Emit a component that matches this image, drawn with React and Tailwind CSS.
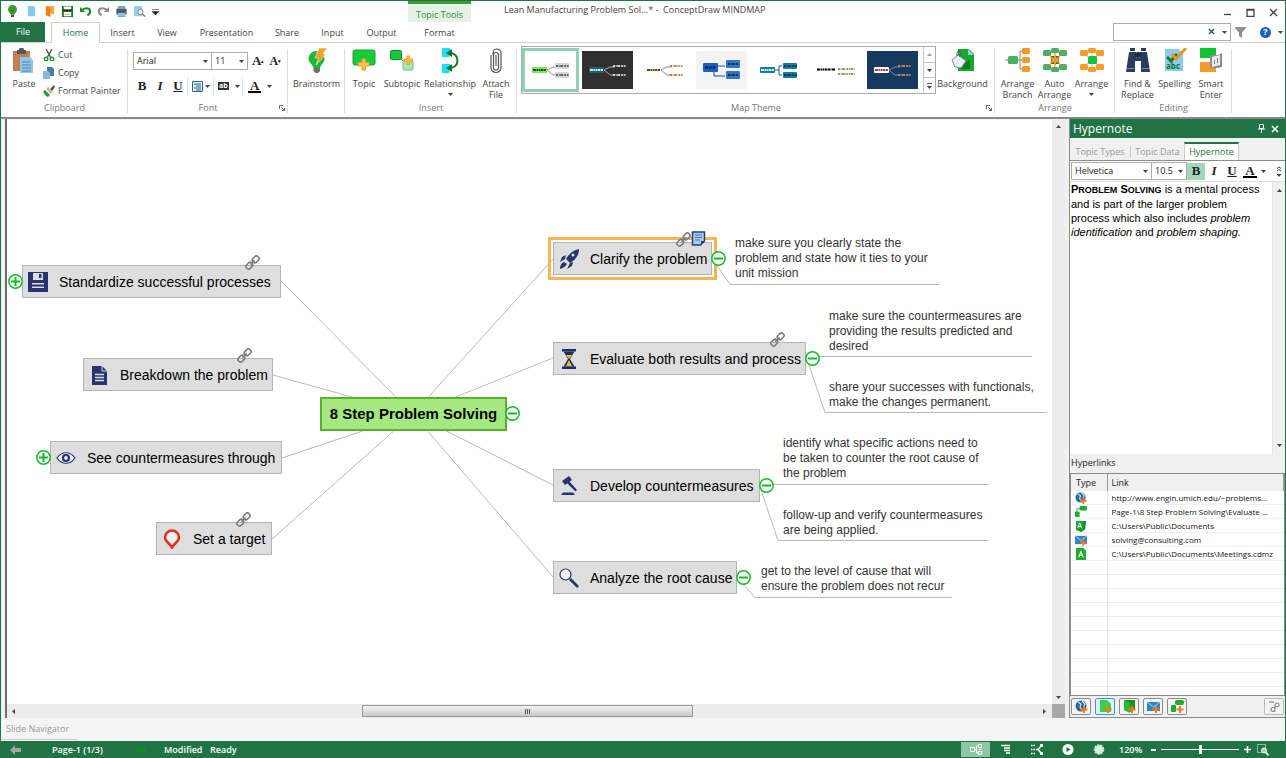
import React from 'react'

const themes = [
  { name: 'Green', bg: 'bg-white', main: '#86e05a', line: '#999', sub: '#d5d5d5', mainText: '#1d5a10', subText: '#444' },
  { name: 'Dark', bg: 'bg-[#303030]', main: '#1f5f73', line: '#aaa', sub: 'none', mainText: '#cfe8f0', subText: '#fff' },
  { name: 'Plain', bg: 'bg-white', main: 'none', line: '#888', sub: 'none', mainText: '#7a3d10', subText: '#b5651d' },
  { name: 'Blue', bg: 'bg-[#f3f3f3]', main: '#1b5fc4', line: '#1b4f9c', sub: '#2f78c8', mainText: '#04183e', subText: '#04183e', big: true },
  { name: 'Teal', bg: 'bg-white', main: '#1a78a8', line: '#1a5a88', sub: '#1a78a8', mainText: '#cfeeff', subText: '#04283e', square: true },
  { name: 'Classic', bg: 'bg-white', main: 'none', line: 'none', sub: 'none', mainText: '#000', subText: '#84762a', wide: true },
  { name: 'Night', bg: 'bg-[#163a5f]', main: '#fff', line: '#6d8aa8', sub: 'none', mainText: '#b03a6a', subText: '#f0a050' },
]

const topics = [
  { text: 'Standardize successful processes', box: 'left-[15px] top-[145px] w-[259px]', icon: 'floppy', fold: '+', foldPos: '-left-[15px]', link: true },
  { text: 'Breakdown the problem', box: 'left-[76px] top-[238px] w-[190px]', icon: 'page', link: true },
  { text: 'See countermeasures through', box: 'left-[43px] top-[321px] w-[232px]', icon: 'eye', fold: '+', foldPos: '-left-[15px]' },
  { text: 'Set a target', box: 'left-[149px] top-[402px] w-[116px]', icon: 'pin', link: true },
  { text: 'Clarify the problem', box: 'left-[546px] top-[122px] w-[159px]', icon: 'rocket', fold: '-', foldPos: '-right-[15px]', link: true, note: true, selected: true },
  { text: 'Evaluate both results and process', box: 'left-[546px] top-[222px] w-[253px]', icon: 'hourglass', fold: '-', foldPos: '-right-[15px]', link: true },
  { text: 'Develop countermeasures', box: 'left-[546px] top-[349px] w-[207px]', icon: 'gavel', fold: '-', foldPos: '-right-[15px]' },
  { text: 'Analyze the root cause', box: 'left-[546px] top-[441px] w-[184px]', icon: 'lens', fold: '-', foldPos: '-right-[15px]' },
]

const notes = [
  { pos: 'left-[728px] top-[116px]', lines: ['make sure you clearly state the', 'problem and state how it ties to your', 'unit mission'] },
  { pos: 'left-[822px] top-[189px]', lines: ['make sure the countermeasures are', 'providing the results predicted and', 'desired'] },
  { pos: 'left-[822px] top-[260px]', lines: ['share your successes with functionals,', 'make the changes permanent.'] },
  { pos: 'left-[776px] top-[316px]', lines: ['identify what specific actions need to', 'be taken to counter the root cause of', 'the problem'] },
  { pos: 'left-[776px] top-[388px]', lines: ['follow-up and verify countermeasures', 'are being applied.'] },
  { pos: 'left-[754px] top-[444px]', lines: ['get to the level of cause that will', 'ensure the problem does not recur'] },
]

const links = [
  { icon: 'globe', text: 'http://www.engin.umich.edu/~problems...' },
  { icon: 'topic', text: 'Page-1\\8 Step Problem Solving\\Evaluate ...' },
  { icon: 'folderA', text: 'C:\\Users\\Public\\Documents' },
  { icon: 'mail', text: 'solving@consulting.com' },
  { icon: 'fileA', text: 'C:\\Users\\Public\\Documents\\Meetings.cdmz' },
]

const Caret = ({ className = '' }) => (
  <svg className={className} width="5" height="3" viewBox="0 0 5 3" aria-hidden="true">
    <path d="M0 0h5L2.5 3z" fill="#444" />
  </svg>
)

const Launcher = () => (
  <button aria-label="More options" className="absolute right-[3px] bottom-[6px]">
    <svg width="6" height="6" viewBox="0 0 6 6">
      <path d="M.5 4V.5H4M2.5 2.500l3 3M5.500 3v2.500H3" fill="none" stroke="#666" />
    </svg>
  </button>
)

const Bulb = () => (
  <svg width="13" height="13" viewBox="0 0 13 13">
    <path d="M6.500 0a4.500 4.500 0 0 1 4.500 4.500c0 2.200-1.800 3-2.500 5h-4C3.800 7.500 2 6.700 2 4.500A4.500 4.500 0 0 1 6.500 0z" fill="#3d9a2c" />
    <path d="M5 9.500h3V12H5z" fill="#5a4a40" />
    <path d="M5 5l1.500 1.500L8 5" stroke="#1d6a14" fill="none" />
  </svg>
)

const quickIcons = [
  ['New', <path key="a" d="M3 1h6l2 2v9H3z" fill="#8cc8ea" />],
  ['Open', <g key="a"><path d="M3 1h9v9H9z" fill="#f9a94a" /><path d="M3 1l5 2v10l-5-2z" fill="#f28010" /></g>],
  ['Save', <g key="a"><path d="M1 1h12v12H1z" fill="#1a7a24" /><path d="M3 1.500h8V5H3zM3 7.500h8v4.500H3z" fill="#fff" /><path d="M2 5.500h10" stroke="#222" strokeWidth="1.500" /><path d="M4 10h6" stroke="#f5a040" /></g>],
  ['Undo', <g key="a" fill="none" stroke="#1f8a2c" strokeWidth="2.200"><path d="M3 6c3-4 9-3 9 1 0 2-1 3-3 4" /><path d="M1 2v5.500h5.500z" fill="#1f8a2c" stroke="none" /></g>],
  ['Redo', <g key="a" fill="none" stroke="#8c8c8c" strokeWidth="2.200"><path d="M11 6C8 2 2 3 2 7c0 2 1 3 3 4" /><path d="M13 2v5.500H7.500z" fill="#8c8c8c" stroke="none" /></g>],
  ['Print', <g key="a"><path d="M3 1h8v3H3zM3 9h8v4H3z" fill="#6ba6cf" /><path d="M1.500 4h11v6h-11z" fill="#4c5a66" /><path d="M3 8.500h8v3.500H3z" fill="#8cc4e8" /></g>],
  ['Print Preview', <g key="a"><path d="M1 1h8l1 2v9H1z" fill="#9ccdea" /><circle cx="8" cy="7.500" r="2.800" fill="#e8f5fd" stroke="#74889a" /><path d="M10 9.500l3 3" stroke="#b06a4a" strokeWidth="1.500" /></g>],
]

const arrangeBlocks = [[9, 0, 5], [1, 2, 6], [17, 2, 6], [1, 16, 6], [17, 16, 6], [9, 19, 5]]

const bigIcons = {
  paste: (
    <g>
      <path d="M2 3h17v20H2z" fill="#bf8150" />
      <path d="M6 2h2a2.500 2.500 0 0 1 5 0h2v4H6z" fill="#555" />
      <path d="M9 9h10l3 3v13H9z" fill="#8ec5ea" />
      <path d="M11 14h8M11 17h9M11 20h9M11 23h9" stroke="#4b86ad" />
    </g>
  ),
  brainstorm: (
    <g>
      <path d="M12.500 3a8 8 0 0 1 8 8c0 4-3.500 5-4.500 9H9.500c-1-4-5-5.500-5-9a8 8 0 0 1 8-8z" fill="#1dbb35" />
      <path d="M9.500 20H16v3l-2 2h-2.500l-2-2z" fill="#707070" />
      <path d="M15 0h8l-4 6h3L12 17l2.500-7H11z" fill="#f6a02c" stroke="#fff" strokeWidth=".5" />
    </g>
  ),
  topic: (
    <g>
      <rect x="2" y="2" width="22" height="15" rx="2" fill="#14cc3c" stroke="#1a9c30" />
      <path d="M11 11h3.500v3.500H18v3.500h-3.500v4H11v-4H7v-3.500h4z" fill="#ffc35a" stroke="#f09a20" />
    </g>
  ),
  subtopic: (
    <g>
      <path d="M12 11l4 4" stroke="#5a9a60" />
      <rect x="1.500" y="2.500" width="11" height="9" rx="1" fill="#14c83c" stroke="#1a8a30" />
      <rect x="14" y="13" width="10" height="9" rx="1" fill="#a8e8b4" stroke="#6cc080" />
      <path d="M18 8h2.500v3h3v2.500h-3v3H18v-3h-3V11h3z" fill="#ffc35a" stroke="#f09a20" />
    </g>
  ),
  relationship: (
    <g>
      <path d="M5 0h8l1 4-2 5H5zM5 16h8l1 4-2 5H5z" fill="#22dcfa" />
      <path d="M13 5c10 0 10 15 0 15" fill="none" stroke="#0f7a2a" strokeWidth="2" />
      <path d="M9 5l6-4v8zM9 20l6-4v8z" fill="#0f7a2a" />
    </g>
  ),
  clip: <path d="M15.500 8v11.500a2.500 2.500 0 0 1-5 0V6.500M8 7v12.500a5 5 0 0 0 10 0V5a4 4 0 0 0-8 0v2M13 7v11M10.500 7a2 2 0 0 1 5 0v2" fill="none" stroke="#555" strokeWidth="1.200" />,
  background: (
    <g>
      <path d="M8 1h11l5 5v17H8z" fill="#15a82b" />
      <path d="M18 1l6 6h-6z" fill="#8ccff0" />
      <path d="M10 16l10-4v9H10z" fill="#0c7f20" />
      <path d="M2 12l6-5 8 6-5 7-6-1z" fill="#eaf1f5" stroke="#7c8a92" />
      <path d="M10 9V4c-1-2-3-1-3 1v3" stroke="#555" fill="none" />
    </g>
  ),
  branch: (
    <g>
      <path d="M0 12h20M15 3v18M15 3h3M15 21h3" stroke="#8a8a70" fill="none" />
      <rect x="3" y="8" width="10" height="8" rx="1.500" fill="#48b060" />
      {[0, 9, 18].map((y) => <rect key={y} x="17" y={y} width="8" height="6" rx="1.500" fill="#f59c28" />)}
    </g>
  ),
  auto: (
    <g>
      {arrangeBlocks.map(([x, y, h]) => <rect key={x + '-' + y} x={x} y={y} width="8" height={h} rx="1.500" fill="#49b162" />)}
      <path d="M9 8h8v8H9z" fill="#207a30" />
      <path d="M13 3v18M5 5l16 14M21 5L5 19" stroke="#e0752a" />
      <path d="M13 7l1.500 3 4-.5-2.500 2.500 2.500 3-4-1-1.500 3-1.500-3-4 1 2.500-3-2.500-2.500 4 .5z" fill="#f59c28" />
    </g>
  ),
  arrange: (
    <g>
      <path d="M13 5v16M5 6l16 12M21 6L5 18" stroke="#e3b788" />
      {arrangeBlocks.map(([x, y, h]) => <rect key={x + '-' + y} x={x} y={y} width="8" height={h} rx="1.500" fill="#f59c28" />)}
      <rect x="9" y="8" width="9" height="8" rx="1.500" fill="#18c23c" />
    </g>
  ),
  find: (
    <g fill="#2a3d5e">
      <path d="M5 0h5v3H5zM16 0h5v3h-5zM4 4h7v6h4V4h7l3 20h-9V13h-6v11H1z" />
      <circle cx="13" cy="7" r="3" fill="#1c2b45" />
      <path d="M2 20h7v1H2zM17 20h7v1h-7z" fill="#7287a8" />
    </g>
  ),
  spelling: (
    <g>
      <path d="M3 1h14l4 4v18H3z" fill="#8bcdf0" />
      <path d="M5 9l4 4 6-7" fill="none" stroke="#1a7a30" strokeWidth="3" />
      <path d="M10 6l4 5L24 0" fill="none" stroke="#f59320" strokeWidth="3" />
      <text x="4" y="21" fontSize="8" fontWeight="700" fill="#0f7030" fontFamily="Open Sans, sans-serif">abc</text>
    </g>
  ),
  smart: (
    <g>
      <path d="M2 0h16v10H2z" fill="#12c232" />
      <path d="M2 14h16v10H2z" fill="#f59c28" />
      <path d="M12 7h8l4-2v14l-4 1h-8z" fill="#8d8d8d" />
      <path d="M14 9l8-2v10l-8 2z" fill="#ededed" />
      <path d="M16.500 12v4M19.500 10v5" stroke="#777" />
    </g>
  ),
}

const BigButton = ({ icon, lines, width, menu }) => (
  <button className={`${width} flex shrink-0 flex-col items-center text-center leading-[11px]`}>
    <svg width="26" height="26" viewBox="0 0 26 26" className="mb-[4px]" aria-hidden="true">{bigIcons[icon]}</svg>
    {lines.map((l) => <span key={l} className="whitespace-nowrap">{l}</span>)}
    {menu && <Caret className="mt-[4px]" />}
  </button>
)

const Group = ({ title, width, launcher, children }) => (
  <section aria-label={title} className={`${width} relative flex shrink-0 flex-col`}>
    <div className="flex h-[55px]">{children}</div>
    {title && <div className="text-center leading-[14px] text-[#777]">{title}</div>}
    {launcher && <Launcher />}
    <span className="absolute top-[3px] right-0 h-[64px] w-px bg-[#dcdcdc]" />
  </section>
)

const SelectBox = ({ label, value, width }) => (
  <div className={`${width} relative h-[18px] shrink-0`}>
    <select aria-label={label} defaultValue={value} className="h-full w-full appearance-none border border-[#ababab] bg-white pl-[3px] text-[9px] text-[#222]">
      <option>{value}</option>
    </select>
    <Caret className="pointer-events-none absolute top-[8px] right-[4px]" />
  </div>
)

const FormatLetter = ({ label, className = '', children }) => (
  <button aria-label={label} className={`${className} flex h-[17px] w-[18px] shrink-0 items-center justify-center font-["Liberation_Serif",serif] text-[13px] font-bold text-[#222]`}>
    {children}
  </button>
)

const ColorLetter = () => (
  <span className="border-b-2 border-black px-[2px] leading-[11px]">A</span>
)

const Divider = () => <span className="h-[18px] w-px bg-[#cfe8da]" />

const ThemePreview = ({ t }) => (
  <svg width="51" height="38" viewBox="0 0 51 38" aria-hidden="true">
    {t.line !== 'none' && <path d={t.square ? 'M21 19h5M26 15v9M26 15h3M26 24h3' : t.big ? 'M14 15h15M18 19v6h11' : 'M22 19l6-3h5M22 19l6 5h5'} fill="none" stroke={t.line} />}
    <rect x="7" y={t.big ? 12 : 16} width="15" height={t.big ? 9 : 6} rx="1" fill={t.main} />
    <path d={t.big ? 'M9 16.500h11' : t.wide ? 'M7 18.500h18' : 'M8 19h13'} stroke={t.mainText} strokeWidth="2" strokeDasharray="3 .5 2 .5 1 .5" />
    <rect x="30" y={t.big ? 9 : 12} width="14" height={t.big ? 8 : 6} rx="1" fill={t.sub} />
    <rect x="30" y={t.big ? 20 : 21} width="14" height={t.big ? 8 : 6} rx="1" fill={t.sub} />
    <path d={t.big ? 'M32 13h10M32 24h10' : t.wide ? 'M28 18h17M28 23h17' : 'M31 15h13M31 24h13'} stroke={t.subText} strokeWidth="1.500" strokeDasharray="2 .7 1 .5 3 1" />
  </svg>
)

const TitleBar = () => (
  <header className="flex h-[21px] shrink-0">
    <div className="flex w-[407px] shrink-0 items-center pl-px">
      <span className="flex w-[20px] justify-center"><Bulb /></span>
      {quickIcons.map(([name, shape]) => (
        <button key={name} aria-label={name} className="flex w-[18px] justify-center">
          <svg width="13" height="13" viewBox="0 0 14 14">{shape}</svg>
        </button>
      ))}
      <button aria-label="Customize" className="ml-[4px]">
        <svg width="7" height="6" viewBox="0 0 7 6"><path d="M0 .5h7M0 2.500h7L3.500 6z" stroke="#1c2040" fill="#1c2040" strokeWidth=".5" /></svg>
      </button>
    </div>
    <div className="w-[63px] shrink-0 border-t-[3px] border-[#3f9a3c] bg-[#e3f2e3] pt-[3px] text-center leading-[16px] text-[#3c8a4a]">Topic Tools</div>
    <h1 className="ml-[33px] pt-[2px] leading-[14px] whitespace-pre text-[#444]">{'Lean Manufacturing Problem Sol...* -  ConceptDraw MINDMAP'}</h1>
    <div className="ml-auto flex items-end">
      {[['Minimize', 'M1 6.500h7'], ['Maximize', 'M1 1.500h7v7h-7zM1 2h7'], ['Close', 'M1 1l7 7M8 1L1 8']].map(([name, d]) => (
        <button key={name} aria-label={name} className="flex w-[23px] justify-center pb-[5px]">
          <svg width="9" height="9" viewBox="0 0 9 9"><path d={d} fill="none" stroke="#444" strokeWidth="1.300" /></svg>
        </button>
      ))}
    </div>
  </header>
)

const tabs = [
  ['Insert', 'w-[45px]'], ['View', 'w-[44px]'], ['Presentation', 'w-[75px]'], ['Share', 'w-[46px]'],
  ['Input', 'w-[45px]'], ['Output', 'w-[53px]'], ['Format', 'w-[63px]'],
]

const TabRow = () => (
  <nav className="flex h-[21px] shrink-0 border-b border-[#d0d0d0]">
    <button className="w-[44px] bg-[#217346] text-white">File</button>
    <button className="-mb-px ml-[6px] w-[49px] border border-b-0 border-[#d0d0d0] bg-white text-[#217346]">Home</button>
    {tabs.map(([name, width]) => <button key={name} className={`${width} pt-px`}>{name}</button>)}
    <div className="ml-auto flex items-center">
      <div className="relative mr-[4px] w-[118px]">
        <input aria-label="Search" className="block h-[18px] w-full border border-[#ababab] bg-white pr-[28px] pl-1" />
        <svg className="absolute top-[5px] right-[16px]" width="7" height="7" viewBox="0 0 7 7"><path d="M1 1l5 5M6 1L1 6" stroke="#1d4f86" strokeWidth="1.400" /></svg>
        <Caret className="absolute top-[8px] right-[4px]" />
      </div>
      <button aria-label="Filter">
        <svg width="11" height="12" viewBox="0 0 11 12"><path d="M0 1h11v1L7 6.500V12L4 10V6.500L0 2z" fill="#8a8f94" /></svg>
      </button>
      <button aria-label="Help" className="mr-[7px] ml-[14px] flex h-[11px] w-[11px] items-center justify-center rounded-full bg-[#1a62b5] text-[9px] font-bold text-white">?</button>
      <Caret className="mr-[2px]" />
    </div>
  </nav>
)

const clipboardItems = [
  ['Cut', <g key="a"><path d="M3 0l5 9M9 0L4 9" stroke="#555" strokeWidth="1.400" /><circle cx="3" cy="10" r="1.800" fill="none" stroke="#1d9a30" strokeWidth="1.400" /><circle cx="9" cy="10" r="1.800" fill="none" stroke="#1d9a30" strokeWidth="1.400" /></g>],
  ['Copy', <g key="a"><path d="M4 0h5l2 2v7H4z" fill="#4a7aa8" /><path d="M0 4h5l2 2v6H0z" fill="#86b7dc" /></g>],
  ['Format Painter', <g key="a"><path d="M11 0L7 4l2 2 3-4z" fill="#555" /><path d="M5 2l5 5-2 2-5-5z" fill="#d8b48c" /><path d="M2 5l5 5-2 2-2-1-3-4z" fill="#1d9a40" /></g>],
]

const Ribbon = () => (
  <div className="flex h-[76px] shrink-0 border-b-2 border-[#8a8a8a] pt-[3px]">
    <Group title="Clipboard" width="w-[127px]">
      <div className="flex w-full pl-[4px]">
        <div className="pt-[2px]"><BigButton icon="paste" lines={['Paste']} width="w-[38px]" /></div>
        <div className="flex flex-col">
          {clipboardItems.map(([name, shape]) => (
            <button key={name} className="flex h-[18px] items-center gap-[3px] whitespace-nowrap">
              <svg width="12" height="12" viewBox="0 0 12 12">{shape}</svg>{name}
            </button>
          ))}
        </div>
      </div>
    </Group>
    <Group title="Font" width="w-[160px]" launcher>
      <div className="flex flex-col gap-[7px] pt-[6px] pl-[5px]">
        <div className="flex items-center">
          <SelectBox label="Font" value="Arial" width="w-[79px]" />
          <SelectBox label="Font size" value="11" width="w-[37px] -ml-px" />
          <button aria-label="Grow font" className="ml-[4px] font-['Liberation_Serif',serif] text-[13px] leading-[14px] font-bold text-[#222]">A<sup className="text-[5px]">▴</sup></button>
          <button aria-label="Shrink font" className="ml-[5px] font-['Liberation_Serif',serif] text-[12px] leading-[14px] font-bold text-[#222]">A<sup className="text-[5px]">▾</sup></button>
        </div>
        <div className="flex items-center">
          <FormatLetter label="Bold">B</FormatLetter>
          <FormatLetter label="Italic"><i>I</i></FormatLetter>
          <FormatLetter label="Underline"><u>U</u></FormatLetter>
          <Divider />
          <button aria-label="Align" className="mr-[3px] ml-[4px] flex items-center gap-[2px]">
            <svg width="11" height="11" viewBox="0 0 11 11"><path d="M.5.500h10v10H.5z" fill="#e0f0f8" stroke="#2a6a8a" /><path d="M2 3h7M4 5h5M2 7h7M4 9h5" stroke="#2a6a8a" /></svg>
            <Caret />
          </button>
          <Divider />
          <button aria-label="Highlight" className="mr-[2px] ml-[4px] flex items-center gap-[6px]">
            <span className="bg-[#333] px-[1px] text-[7px] leading-[8px] font-bold text-white">ab</span>
            <Caret />
          </button>
          <Divider />
          <FormatLetter label="Font color" className="ml-[3px]"><ColorLetter /></FormatLetter>
          <Caret className="ml-[3px]" />
        </div>
      </div>
    </Group>
    <Group width="w-[57px]">
      <div className="pt-[2px]"><BigButton icon="brainstorm" lines={['Brainstorm']} width="w-[57px]" /></div>
    </Group>
    <Group title="Insert" width="w-[172px]">
      <div className="flex pt-[2px]">
        <BigButton icon="topic" lines={['Topic']} width="w-[38px]" />
        <BigButton icon="subtopic" lines={['Subtopic']} width="w-[38px]" />
        <BigButton icon="relationship" lines={['Relationship']} width="w-[58px]" menu />
        <BigButton icon="clip" lines={['Attach', 'File']} width="w-[34px]" />
      </div>
    </Group>
    <Group title="Map Theme" width="w-[478px]" launcher>
      <div className="flex pl-[4px]">
        <div className="flex h-[48px] w-[415px] shrink-0 border border-[#ababab]">
          <div className="flex flex-1 items-center gap-[6px]">
            {themes.map((t, i) => (
              <button key={t.name} aria-label={`${t.name} theme`} className={`${i === 0 ? 'mr-[-3px] h-[44px] border-[3px] border-[#8fd0ae]' : 'h-[38px]'} ${t.bg} flex items-center`}>
                <ThemePreview t={t} />
              </button>
            ))}
          </div>
          <div className="flex w-[12px] flex-col divide-y divide-[#c4c4c4] border-l border-[#c4c4c4]">
            <button aria-label="Previous themes" className="flex flex-1 items-center justify-center"><Caret className="rotate-180 opacity-50" /></button>
            <button aria-label="Next themes" className="flex flex-1 items-center justify-center"><Caret /></button>
            <button aria-label="All themes" className="flex flex-1 flex-col items-center justify-center gap-[2px]"><span className="h-px w-[5px] bg-[#555]" /><Caret /></button>
          </div>
        </div>
        <div className="pt-[2px]"><BigButton icon="background" lines={['Background']} width="w-[53px]" /></div>
      </div>
    </Group>
    <Group title="Arrange" width="w-[120px]">
      <div className="flex pt-[2px] pl-[4px]">
        <BigButton icon="branch" lines={['Arrange', 'Branch']} width="w-[37px]" />
        <BigButton icon="auto" lines={['Auto', 'Arrange']} width="w-[37px]" />
        <BigButton icon="arrange" lines={['Arrange']} width="w-[37px]" menu />
      </div>
    </Group>
    <Group title="Editing" width="w-[117px]">
      <div className="flex pt-[2px] pl-[4px]">
        <BigButton icon="find" lines={['Find &', 'Replace']} width="w-[37px]" />
        <BigButton icon="spelling" lines={['Spelling']} width="w-[37px]" />
        <BigButton icon="smart" lines={['Smart', 'Enter']} width="w-[36px]" />
      </div>
    </Group>
  </div>
)

const topicIcons = {
  floppy: <g><path d="M0 0h20v20H0z" fill="#26356f" /><path d="M5 1h10v7H5zM4 11h12v1.500H4zM4 14.500h12V16H4z" fill="#dedede" /><path d="M11 2h2.500v4H11z" fill="#26356f" /></g>,
  page: <g><path d="M3 1h10l5 5v14H3z" fill="#26356f" /><path d="M13 1v5h5" fill="none" stroke="#dedede" /><path d="M6 9.500h9M6 12.500h9M6 15.500h9" stroke="#dedede" strokeWidth="1.400" /></g>,
  eye: <g fill="none" stroke="#26356f"><path d="M1 10c5-7 13-7 18 0-5 7-13 7-18 0z" fill="#eef2fa" strokeWidth="1.200" /><circle cx="10" cy="10" r="3" strokeWidth="2.200" /></g>,
  pin: <path d="M10 1.500a7 7 0 0 1 7 7c0 4-5 6-7 10-2-4-7-6-7-10a7 7 0 0 1 7-7z" fill="#f2f2f2" stroke="#e0341a" strokeWidth="2.600" />,
  rocket: <g fill="#26356f"><path d="M20 0c-6 1-10 5-13 10l4 4c5-3 9-7 9-14z" /><path d="M7 6L3 8l-2 5 5-3zM14 13l-1 4-5 3 3-6zM5 13c-3 1-4 4-4 7 3-1 5-2 7-5z" /><circle cx="14" cy="6" r="1.500" fill="#dedede" /></g>,
  hourglass: <g><path d="M3 0h14v2.500H3zM3 17.500h14V20H3z" fill="#1d2f66" /><path d="M4.500 2.500h11L11 10l4.500 7.500h-11L9 10z" fill="#1d2f66" /><path d="M7 6h6l-3 4zM10 11l3 6H7z" fill="#f2c01a" /></g>,
  gavel: <g fill="#26356f"><path d="M3 5l7-5 3 4-7 5zM8 7l2-2 8 9-1.500 1.500z" /><path d="M4 16.500h10l2 2.500H2z" /></g>,
  lens: <g fill="none" stroke="#26356f"><circle cx="6.500" cy="6.500" r="5.500" fill="#f6f8fc" strokeWidth="1.200" /><path d="M11 11l8 8" strokeWidth="2.600" /></g>,
}

const ChainLink = ({ className }) => (
  <svg className={className} width="15" height="15" viewBox="0 0 15 15" aria-hidden="true">
    <g transform="rotate(-45 7.500 7.500)" fill="none" stroke="#7d7d7d" strokeWidth="1.600">
      <rect x="-.5" y="5" width="7" height="5" rx="2" />
      <rect x="8.500" y="5" width="7" height="5" rx="2" />
      <path d="M4.500 7.500h6" />
    </g>
  </svg>
)

const Fold = ({ kind, className }) => (
  <button aria-label={kind === '+' ? 'Expand' : 'Collapse'} className={className}>
    <svg width="15" height="15" viewBox="0 0 15 15">
      <circle cx="7.500" cy="7.500" r="6.700" fill="#fff" stroke="#12bb24" strokeWidth="1.500" />
      <path d={kind === '+' ? 'M3 7.500h9M7.500 3v9' : 'M3 7.500h9'} stroke="#12bb24" strokeWidth="2" />
    </svg>
  </button>
)

const MindMap = () => (
  <div className="relative min-w-0 flex-1 overflow-hidden bg-white font-['Liberation_Sans',Arial,sans-serif] text-black">
    <svg className="absolute top-0 left-0" width="1060" height="582" viewBox="7 120 1060 582" aria-hidden="true">
      <path
        d="M413 414L281 281M413 414L273 375M413 414L282 458M413 414L272 539M413 414L553 259M413 414L553 358M413 414L553 485M413 414L553 577M716 264l14 20.500h209M819 356.500h213M808 362l17 50.500h222M772 484.500h217M761 490l17 50.500h210M741 582l14 15.500h197"
        fill="none" stroke="#b9b9b9"
      />
    </svg>
    {topics.map((t) => (
      <div key={t.text} className={`${t.box} absolute flex h-[33px] items-center border border-[#b4b4b4] bg-[#dedede] pl-[5px] ${t.selected ? 'outline-[3px] outline-offset-[2px] outline-[#f9b54f]' : ''}`}>
        <svg width="20" height="20" viewBox="0 0 20 20" aria-hidden="true">{topicIcons[t.icon]}</svg>
        <span className="ml-[11px] text-[14px] leading-[16px] whitespace-nowrap">{t.text}</span>
        {t.link && <ChainLink className="absolute -top-[11px] right-[20px]" />}
        {t.note && (
          <svg className="absolute -top-[12px] right-[5px]" width="15" height="15" viewBox="0 0 15 15">
            <path d="M1.500 1h12v9l-4 4h-8z" fill="#a9cdee" stroke="#26406f" strokeWidth="1.500" />
            <path d="M4 4h7M4 6.500h7M4 9h5" stroke="#4a74a8" /><path d="M14 10h-4v4z" fill="#26406f" />
          </svg>
        )}
        {t.fold && <Fold kind={t.fold} className={`absolute top-[8px] ${t.foldPos}`} />}
      </div>
    ))}
    <div className="absolute top-[277px] left-[313px] flex h-[34px] w-[187px] items-center justify-center border-2 border-[#5cb030] bg-[#a5e882] pt-px text-[15px] font-bold whitespace-nowrap">
      8 Step Problem Solving
      <Fold kind="-" className="absolute top-[7px] -right-[15px]" />
    </div>
    {notes.map((n) => (
      <p key={n.lines[0]} className={`${n.pos} absolute text-[12px] leading-[15px] whitespace-nowrap text-[#333]`}>
        {n.lines.map((l) => <span key={l} className="block">{l}</span>)}
      </p>
    ))}
  </div>
)

const orangePlus = <path d="M8 6h2v2.500h2.500v2H10V13H8v-2.500H5.500v-2H8z" fill="#f27a1a" />
const linkIcons = {
  globe: <g><circle cx="6" cy="6" r="5.500" fill="#2a66a0" /><path d="M3 2l3 2-1 3 2 3M7 1l3 3-1 2" stroke="#cfe6f8" strokeWidth="1.200" fill="none" />{orangePlus}</g>,
  topic: <g fill="#1cae2e"><rect x="5" y="0" width="8" height="5" rx="1.500" /><rect x="0" y="6" width="5" height="6" rx="1" /><path d="M2 7V3h4" fill="none" stroke="#1cae2e" /></g>,
  folderA: <g><path d="M2 1h10l-1 9-4 3-5-2z" fill="#178a28" /><path d="M1 1h8v10H1z" fill="#1fa534" /><path d="M3 8.500L5 3l2 5.500M3.500 7h3" stroke="#fff" fill="none" /></g>,
  mail: <g><path d="M0 2h13v9H0z" fill="#2f86c4" /><path d="M0 2l6.500 5L13 2" fill="none" stroke="#a8d4f0" />{orangePlus}</g>,
  fileA: <g><path d="M1 0h8l3 3v10H1z" fill="#1cae2e" /><path d="M4 10l2.500-6L9 10M5 8h3" stroke="#fff" strokeWidth="1.200" fill="none" /></g>,
  newFile: <g><path d="M1 0h7l4 4v8H1z" fill="#3bd04a" />{orangePlus}</g>,
  newFolder: <g><path d="M1 0h11v9l-5 3-6-2z" fill="#17931f" /><path d="M1 0l6 3v10l-6-3z" fill="#2ab83a" />{orangePlus}</g>,
  newTopic: <g fill="#1cae2e"><rect x="4" y="0" width="9" height="5" rx="2" /><rect x="0" y="5" width="5" height="7" rx="1" />{orangePlus}</g>,
}

const LinkIcon = ({ name, size = 12 }) => (
  <svg width={size} height={size} viewBox="0 0 13 13" aria-hidden="true">{linkIcons[name]}</svg>
)

const SidePanel = () => (
  <aside className="flex w-[216px] shrink-0 flex-col border-l border-[#8c8c8c] bg-[#f0f0f0]">
    <div className="flex h-[19px] shrink-0 items-center bg-[#217346] px-[3px] text-[12px] text-white">
      Hypernote
      <button aria-label="Pin panel" className="ml-auto">
        <svg width="7" height="9" viewBox="0 0 7 9"><path d="M1.500.5h4v4h-4zM0 5h7M3.500 5v4" stroke="#fff" fill="none" /></svg>
      </button>
      <button aria-label="Close panel" className="mr-[3px] ml-[6px]">
        <svg width="8" height="8" viewBox="0 0 8 8"><path d="M1 1l6 6M7 1L1 7" stroke="#fff" strokeWidth="1.500" /></svg>
      </button>
    </div>
    <div className="flex h-[22px] shrink-0 items-end pt-[5px] leading-[16px] text-[#999]">
      <button className="w-[60px]">Topic Types</button>
      <button className="mb-[2px] w-[54px] border-l border-[#ccc] leading-[12px]">Topic Data</button>
      <button className="w-[55px] border border-t-2 border-b-0 border-[#ccc] border-t-[#217346] bg-white text-[#217346]">Hypernote</button>
    </div>
    <div className="flex h-[21px] shrink-0 items-center border-t border-[#8c8c8c] bg-white pl-px">
      <SelectBox label="Note font" value="Helvetica" width="w-[81px]" />
      <SelectBox label="Note font size" value="10.5" width="w-[36px] -ml-px" />
      <FormatLetter label="Bold" className="bg-[#a3d6ba]">B</FormatLetter>
      <FormatLetter label="Italic"><i>I</i></FormatLetter>
      <FormatLetter label="Underline"><u>U</u></FormatLetter>
      <FormatLetter label="Text color"><ColorLetter /></FormatLetter>
      <Caret className="ml-[2px]" />
      <button aria-label="More" className="mr-[3px] ml-auto">
        <svg width="6" height="11" viewBox="0 0 6 11"><path d="M1 2.500L3 1l2 1.500M1 5l2-1.500L5 5" fill="none" stroke="#444" /><path d="M.5 8h5L3 11z" fill="#444" /></svg>
      </button>
    </div>
    <div className="flex min-h-0 flex-[273] border-t border-[#ddd] bg-white">
      <div className="min-w-0 flex-1 overflow-hidden pl-px font-['Liberation_Sans',Arial,sans-serif] text-[11px] leading-[14px] text-black">
        <b>P<span className="text-[9px]">ROBLEM</span> S<span className="text-[9px]">OLVING</span></b> is a mental process<br />
        and is part of the larger problem<br />
        process which also includes <i>problem</i><br />
        <i>identification</i> and <i>problem shaping.</i>
      </div>
      <div className="flex w-[13px] flex-col items-center justify-between border-l border-[#e4e4e4] bg-[#f0f0f0] py-[7px]">
        <Caret className="rotate-180" /><Caret />
      </div>
    </div>
    <h2 className="h-[19px] shrink-0 pl-[1px] leading-[18px] text-[#222]">Hyperlinks</h2>
    <div className="min-h-0 flex-[222] overflow-hidden border border-[#8c8c8c] bg-white">
      <table className="w-full table-fixed border-collapse text-[8px] leading-[13px]">
        <thead>
          <tr className="h-[17px] bg-[#f0f0f0] text-left text-[9px] text-[#222]">
            <th className="w-[36px] border-r border-[#999] pl-[5px] font-normal">Type</th>
            <th className="border-r border-[#999] pl-[4px] font-normal">Link</th>
          </tr>
        </thead>
        <tbody>
          {links.map((l) => (
            <tr key={l.text} className="h-[14px] border-b border-[#f1f1f1]">
              <td className="border-r border-[#e8e8e8] p-0 pl-[4px]"><LinkIcon name={l.icon} /></td>
              <td className="overflow-hidden p-0 pl-[4px] whitespace-nowrap text-[#111]">{l.text}</td>
            </tr>
          ))}
          {Array.from({ length: 12 }, (_, i) => (
            <tr key={i} className="h-[14px] border-b border-[#ececec]">
              <td className="border-r border-[#e8e8e8]" /><td />
            </tr>
          ))}
        </tbody>
      </table>
    </div>
    <div className="flex h-[22px] shrink-0 items-center gap-[4px] border-b border-[#8c8c8c] pl-[1px]">
      {[['Web link', 'globe'], ['File link', 'newFile'], ['Folder link', 'newFolder'], ['Mail link', 'mail'], ['Topic link', 'newTopic']].map(([name, icon]) => (
        <button key={name} aria-label={name} className={`${icon === 'newFile' ? 'border-[#3a9ad0] bg-[#dff2fb]' : 'border-[#8c8c8c] bg-[#f4f4f4]'} flex h-[17px] w-[20px] items-center justify-center rounded-[2px] border`}>
          <LinkIcon name={icon} size={13} />
        </button>
      ))}
      <button aria-label="Remove link" className="mr-[1px] ml-auto flex h-[17px] w-[20px] items-center justify-center rounded-[2px] border border-[#bbb] bg-[#f4f4f4]">
        <svg width="13" height="13" viewBox="0 0 13 13"><path d="M1 2h5" stroke="#666" /><g fill="none" stroke="#888" strokeWidth="1.200"><circle cx="9" cy="5" r="2" /><circle cx="5" cy="9.500" r="2" /><path d="M6 8l2-2" /></g></svg>
      </button>
    </div>
  </aside>
)

const statusViews = [
  ['Map view', <path key="a" d="M.5 3.500h4v4h-4zM8.500.5h3v3h-3zM8.500 7.500h3v3h-3zM4.500 5.500h2M6.500 2v7M6.500 2h2M6.500 9h2M8.500 5.500h3" fill="none" stroke="#fff" />, 'w-[29px] bg-[#8fc7a6]'],
  ['Outline view', <path key="a" d="M1 1.500h9M4 4h6M4 6.500h6M6 9h4" stroke="#fff" strokeWidth="1.300" />, 'w-[32px]'],
  ['Tree view', <g key="a" fill="none" stroke="#fff"><path d="M0 1.500h4M0 5.500h4M0 9.500h4" strokeDasharray="1.500 1" strokeWidth="1.500" /><path d="M5 5.500h2l3-3.500M7 5.500l3 3.500" strokeWidth="1.500" /><path d="M9.500.5h2v2h-2zM9.500 8.500h2v2h-2z" fill="#fff" /></g>, 'w-[29px]'],
  ['Presentation', <g key="a"><circle cx="6" cy="5.500" r="5.500" fill="#fff" /><path d="M4.500 3v5L8.500 5.500z" fill="#217346" /></g>, 'w-[34px]'],
  ['Settings', <g key="a"><circle cx="6" cy="5.500" r="4.300" fill="#d5eedd" stroke="#d5eedd" strokeWidth="2" strokeDasharray="2 1" /></g>, 'w-[27px]'],
]

const StatusBar = () => (
  <footer className="flex h-[17px] shrink-0 items-center bg-[#217346] font-semibold text-white">
    <button aria-label="Previous page" className="ml-[9px]">
      <svg width="12" height="10" viewBox="0 0 12 10"><path d="M0 5l5-5v3h6v4H5v3z" fill="#a3a3a3" /></svg>
    </button>
    <span className="ml-[30px] w-[84px]">Page-1 (1/3)</span>
    <button aria-label="Next page">
      <svg width="11" height="10" viewBox="0 0 12 10"><path d="M12 5L7 0v3H0v4h7v3z" fill="#0b8f1c" /></svg>
    </button>
    <span className="ml-[17px] w-[46px]">Modified</span>
    <span>Ready</span>
    <div className="ml-auto flex h-full items-center">
      {statusViews.map(([name, shape, cls]) => (
        <button key={name} aria-label={name} className={`${cls} flex h-[15px] items-center justify-center`}>
          <svg width="12" height="11" viewBox="0 0 12 11">{shape}</svg>
        </button>
      ))}
      <span className="ml-[7px] w-[32px]">120%</span>
      <button aria-label="Zoom out" className="h-[2px] w-[5px] bg-white" />
      <input type="range" aria-label="Zoom" defaultValue="51" className="mx-[5px] h-[9px] w-[78px] appearance-none bg-[linear-gradient(#fff,#fff)] bg-[length:100%_1px] bg-center bg-no-repeat [&::-webkit-slider-thumb]:h-[9px] [&::-webkit-slider-thumb]:w-[3px] [&::-webkit-slider-thumb]:appearance-none [&::-webkit-slider-thumb]:bg-white" />
      <button aria-label="Zoom in">
        <svg width="7" height="7" viewBox="0 0 7 7"><path d="M3.500 0v7M0 3.500h7" stroke="#fff" strokeWidth="1.600" /></svg>
      </button>
      <button aria-label="Zoom to selection" className="mr-[16px] ml-[6px]">
        <svg width="12" height="12" viewBox="0 0 12 12"><path d="M.5.500h8v8h-8z" fill="none" stroke="#fff" strokeDasharray="1 1" /><circle cx="7" cy="6.500" r="2.500" fill="#9fd0b4" stroke="#fff" /><path d="M9 8.500l2.500 3" stroke="#fff" strokeWidth="1.600" /></svg>
      </button>
    </div>
  </footer>
)

export default function App() {
  return (
    <div className="flex h-screen flex-col overflow-hidden border border-b-0 border-[#217346] bg-white font-['Open_Sans','Noto_Sans',sans-serif] text-[9px] text-[#444]">
      <TitleBar />
      <TabRow />
      <Ribbon />
      <main className="flex min-h-0 flex-1 bg-[#f0f0f0]">
        <div className="ml-[4px] flex min-w-0 flex-1 flex-col border-l-2 border-[#6e6e6e] pt-px">
          <div className="flex min-h-0 flex-1">
            <MindMap />
            <div className="flex w-[13px] flex-col items-center justify-between bg-[#ececec] py-[5px]">
              <Caret className="rotate-180" /><Caret />
            </div>
          </div>
          <div className="flex h-[14px] shrink-0 items-center bg-[#ececec] pl-[4px]">
            <Caret className="rotate-90" />
            <div className="flex flex-1 px-[8px]">
              <div className="flex-[340]" />
              <div className="flex h-[12px] flex-[331] items-center justify-center gap-px border border-[#999] bg-linear-to-b from-[#f4f4f4] to-[#c8c8c8]">
                <span className="h-[5px] w-px bg-[#555]" /><span className="h-[5px] w-px bg-[#555]" /><span className="h-[5px] w-px bg-[#555]" />
              </div>
              <div className="flex-[343]" />
            </div>
            <Caret className="mr-[5px] -rotate-90" />
            <div className="h-full w-[13px] bg-[#a8a8a8]" />
          </div>
        </div>
        <div className="w-[4px] shrink-0" />
        <SidePanel />
      </main>
      <div className="flex h-[23px] shrink-0 bg-[#f4f4f4]">
        <button className="mb-[1px] w-[77px] border-b border-[#d8c8d0] pl-[5px] text-left text-[#999]">Slide Navigator</button>
      </div>
      <StatusBar />
    </div>
  )
}
